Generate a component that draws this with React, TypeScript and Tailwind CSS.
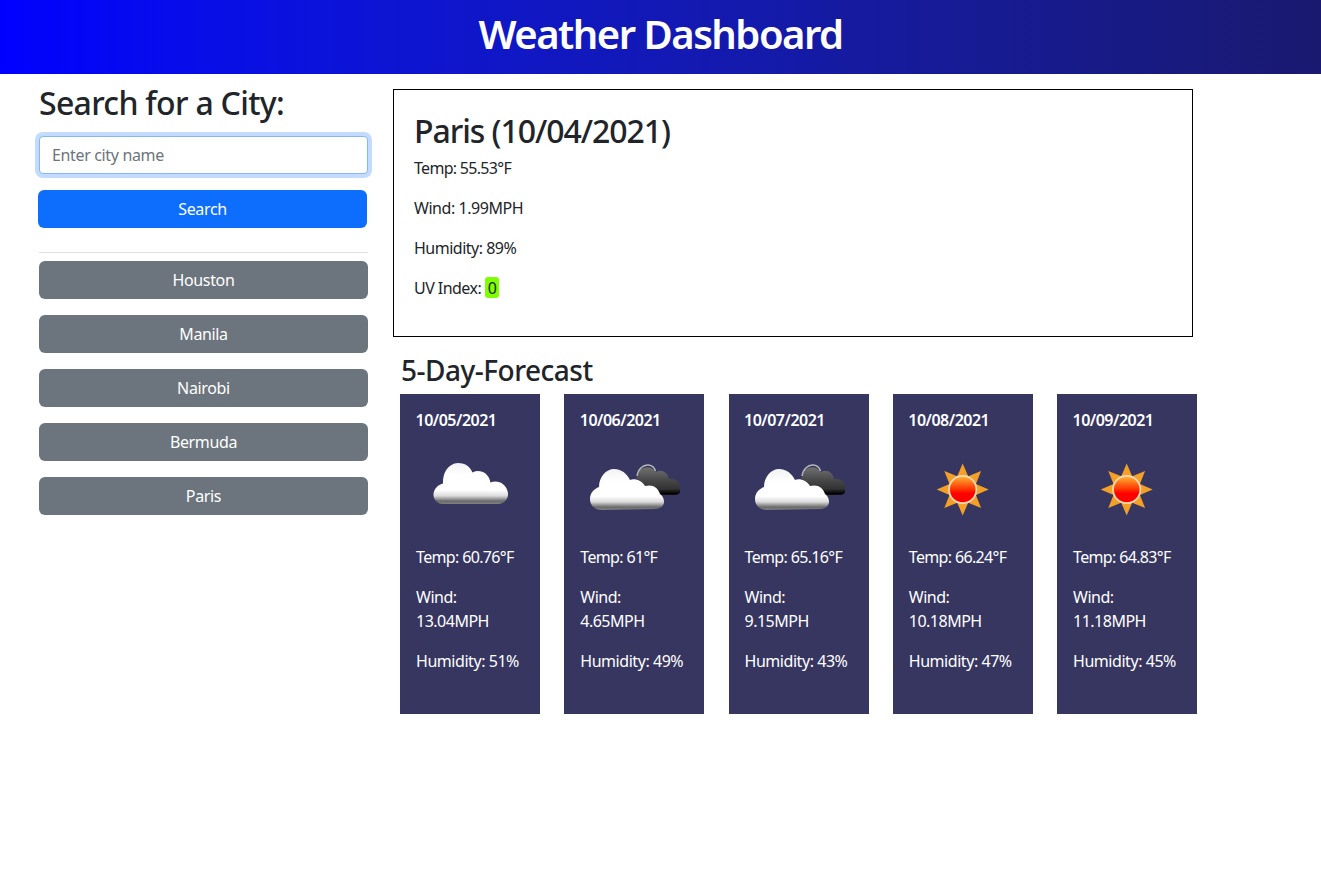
const sans = "font-['Noto_Sans','Open_Sans',sans-serif]";

const cities = ["Houston", "Manila", "Nairobi", "Bermuda", "Paris"];
const days = [
  { date: "10/05/2021", icon: "cloud", temp: "60.76", wind: "13.04", hum: "51" },
  { date: "10/06/2021", icon: "pair", temp: "61", wind: "4.65", hum: "49" },
  { date: "10/07/2021", icon: "pair", temp: "65.16", wind: "9.15", hum: "43" },
  { date: "10/08/2021", icon: "sun", temp: "66.24", wind: "10.18", hum: "47" },
  { date: "10/09/2021", icon: "sun", temp: "64.83", wind: "11.18", hum: "45" },
];

const CLOUD =
  "M27 67C20 67 17 61 17.500 56.500C18.500 50.500 23 47.500 27 46.500C26.500 36 32 26.500 42 26C50 26 54 30 56.500 35.500C63 32 72.500 35 74.500 45.500C81 42.500 90.500 46 92 56C92.500 62 88.500 66.500 82 67Z";
const FRONT =
  "M22 73C14 73 10 68 10 62C10 56 14 52 19 50C19 40 26 32 34 32C42 32 47 37 50 43C55 41 62 44 65 49C72 47 78 50 80 57C83 59 84 62 84 65C84 69 80 72 75 72Z";
const BACK =
  "M60 58C55 50 55 38 60 33C65 28.500 73 30 76 35C81 32 88 35 89 42C95 41 101 46 101 52C101 56 98 58 94 58Z";

const rays = [0, 45, 90, 135, 180, 225, 270, 315].map((deg) => {
  const a = (deg * Math.PI) / 180;
  const cx = 53.7;
  const cy = 52.5;
  const px = -Math.sin(a);
  const py = Math.cos(a);
  const tip = `${cx + Math.cos(a) * 26},${cy + Math.sin(a) * 26}`;
  const b = 12;
  const w = 6;
  const l = `${cx + Math.cos(a) * b + px * w},${cy + Math.sin(a) * b + py * w}`;
  const r = `${cx + Math.cos(a) * b - px * w},${cy + Math.sin(a) * b - py * w}`;
  return `${tip} ${l} ${r}`;
});

function Defs({ id }: { id: string }) {
  return (
    <defs>
      <linearGradient id={`${id}w`} x1="0" y1="0" x2="0" y2="1">
        <stop offset="0" stopColor="#f2f2f2" />
        <stop offset="0.3" stopColor="#ffffff" />
        <stop offset="0.66" stopColor="#ffffff" />
        <stop offset="0.8" stopColor="#dcdcdc" />
        <stop offset="0.93" stopColor="#6a6a6a" />
        <stop offset="1" stopColor="#808080" />
      </linearGradient>
      <linearGradient id={`${id}d`} x1="0" y1="0" x2="0" y2="1">
        <stop offset="0" stopColor="#707070" />
        <stop offset="0.5" stopColor="#454545" />
        <stop offset="0.78" stopColor="#333333" />
        <stop offset="0.95" stopColor="#000000" />
        <stop offset="1" stopColor="#111111" />
      </linearGradient>
      <linearGradient id={`${id}s`} x1="0" y1="0" x2="0" y2="1">
        <stop offset="0" stopColor="#ffb030" />
        <stop offset="0.5" stopColor="#ff3000" />
        <stop offset="0.65" stopColor="#ff0000" />
        <stop offset="1" stopColor="#ff0000" />
      </linearGradient>
      <filter id={`${id}b`} x="-10%" y="-10%" width="120%" height="120%">
        <feGaussianBlur stdDeviation="0.7" />
      </filter>
    </defs>
  );
}

function WeatherIcon({ kind, id }: { kind: string; id: string }) {
  return (
    <svg width="100" height="100" viewBox="0 0 100 100" className="block">
      <Defs id={id} />
      {kind === "cloud" && <path d={CLOUD} fill={`url(#${id}w)`} filter={`url(#${id}b)`} />}
      {kind === "pair" && (
        <g filter={`url(#${id}b)`}>
          <path d={BACK} fill={`url(#${id}d)`} />
          <path d="M57 39C58 32 63 27.500 68.500 28C72 28.500 74.500 30.500 75.500 34" fill="none" stroke="#b8b8b8" strokeWidth="1.400" />
          <path d={FRONT} fill={`url(#${id}w)`} />
        </g>
      )}
      {kind === "sun" && (
        <g filter={`url(#${id}b)`}>
          <g fill="#f4a025">
            {rays.map((p) => (
              <polygon key={p} points={p} />
            ))}
          </g>
          <circle cx="53.7" cy="52.5" r="14.500" fill="#fbdcb8" />
          <circle cx="53.7" cy="52.500" r="12.800" fill={`url(#${id}s)`} />
        </g>
      )}
    </svg>
  );
}

export default function App() {
  return (
    <div className={`${sans} min-h-[892px] bg-white text-[#212529] text-[16px] leading-[24px] tracking-[-0.35px]`}>
      <header className="h-[74px] pb-[6px] flex items-center justify-center bg-gradient-to-r from-[#0000ff] to-[#191970]">
        <h1 className="text-white text-[40px] leading-[48px] font-semibold tracking-[-1.5px]">Weather Dashboard</h1>
      </header>

      <div className="flex">
        <aside className="w-[329px] ml-[39px] shrink-0 flex flex-col">
          <h2 className="mt-[10px] text-[32px] leading-[38px] font-medium tracking-[-0.7px]">Search for a City:</h2>
          <div className="mt-[10px] -mx-1 p-1 overflow-hidden">
            <input
              placeholder="Enter city name"
              className="block w-full h-[38px] px-3 bg-white rounded-[4px] border border-[#86b7fe] shadow-[0_0_0_4px_rgba(13,110,253,0.25)] outline-none placeholder:text-[#6c757d]"
            />
          </div>
          <button className="mt-3 -ml-px mr-px h-[38px] rounded-[6px] bg-[#0d6efd] text-white">Search</button>
          <hr className="mt-6 border-0 h-px bg-[#dfe0e1]" />
          <div className="mt-2 flex flex-col gap-4">
            {cities.map((c) => (
              <button key={c} className="h-[38px] rounded-[6px] bg-[#6c757d] text-white">
                {c}
              </button>
            ))}
          </div>
        </aside>

        <main className="ml-[25px] flex flex-col items-start">
          <section className="mt-[15px] w-[800px] h-[248px] border border-black p-5">
            <h2 className="text-[32px] leading-[42px] font-medium tracking-[-1.05px] mb-[4px]">Paris (10/04/2021)</h2>
            <p className="mb-4 tracking-[-0.7px]">Temp: 55.53°F</p>
            <p className="mb-4 tracking-[-0.45px]">Wind: 1.99MPH</p>
            <p className="mb-4 tracking-[-0.5px]">Humidity: 89%</p>
            <p className="tracking-[-0.55px]">
              UV Index: <span className="inline-block h-[21px] leading-[22px] px-[3px] rounded-[3px] bg-[#7fff00]">0</span>
            </p>
          </section>
          <h3 className="mt-4 ml-2 text-[28px] leading-[34px] font-medium tracking-[-0.5px]">5-Day-Forecast</h3>
          <div className="mt-[7px] ml-[7px] w-[797px] flex justify-between">
            {days.map((d, i) => (
              <article key={d.date} className="w-[140px] h-[320px] bg-[#363661] text-white p-4">
                <h4 className="-ml-[0.5px] font-semibold leading-[21px] mb-[6px] tracking-[-0.5px]">{d.date}</h4>
                <WeatherIcon kind={d.icon} id={`i${i}`} />
                <p className="mt-[8px] mb-4 tracking-[-0.65px]">Temp: {d.temp}°F</p>
                <p className="mb-4 tracking-[-0.5px]">
                  Wind:
                  <br />
                  {d.wind}MPH
                </p>
                <p className="tracking-[-0.45px]">Humidity: {d.hum}%</p>
              </article>
            ))}
          </div>
        </main>
      </div>
    </div>
  );
}
